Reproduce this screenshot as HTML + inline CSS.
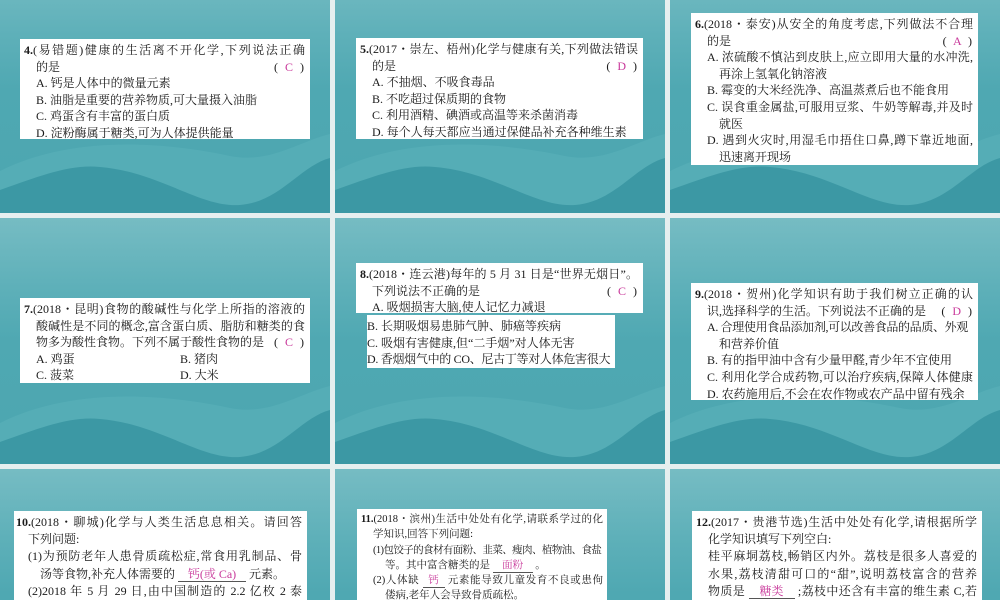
<!DOCTYPE html>
<html style="width:1000px;height:600px;overflow:hidden"><head><meta charset="utf-8">
<style>
*{margin:0;padding:0;box-sizing:border-box}
body{width:1000px;height:600px;background:#e6efef;position:relative;overflow:hidden;font-family:"Liberation Serif","Noto Serif CJK SC",serif;color:#1a1a1a}
.s{position:absolute;width:330px;overflow:hidden}
.s svg{position:absolute;left:0;width:330px;height:247px}
.b{position:absolute;background:#fff;font-size:12px;line-height:16.6px;padding:3px 5px 2px 4px;white-space:nowrap;overflow:hidden}
.b div{height:16.6px}
.j{text-align:justify;text-align-last:justify;text-justify:inter-character}
.i{padding-left:12px}
.ii{padding-left:24px}
.a{color:#c8389a}
.r{float:right;padding-right:1px;word-spacing:4px}
.u{color:#c8389a;border-bottom:1px solid #555;display:inline-block;text-align:center;text-align-last:center;line-height:13px}
b{font-weight:bold}
.sm{font-size:10.5px;line-height:15.3px}
.sm div{height:15.3px}
.lg div{height:17.2px}
.lg{line-height:17.2px}
</style></head><body>
<svg width="0" height="0" style="position:absolute;left:0;top:0">
<defs>
<linearGradient id="g" x1="0" y1="0" x2="0" y2="1">
<stop offset="0" stop-color="#76bcc3"/><stop offset="0.28" stop-color="#5eb0b9"/><stop offset="0.5" stop-color="#4fa8b2"/><stop offset="1" stop-color="#4ca6b0"/>
</linearGradient>
<g id="bg">
<rect width="330" height="247" fill="url(#g)"/>
<path d="M0,205 C70,170 160,175 230,190 C270,198 300,175 330,168 L330,247 L0,247Z" fill="#55adb6"/>
<path d="M0,224 C40,210 70,198 100,201 C160,206 200,242 240,239 C280,236 300,200 330,192 L330,247 L0,247Z" fill="#3c98a4"/>
</g></defs></svg>

<div class="s" style="left:0;top:0;height:213px"><svg style="top:-34px"><use href="#bg"/></svg></div>
<div class="s" style="left:335px;top:0;height:213px"><svg style="top:-34px"><use href="#bg"/></svg></div>
<div class="s" style="left:670px;top:0;height:213px"><svg style="top:-34px"><use href="#bg"/></svg></div>
<div class="s" style="left:0;top:218px;height:246px"><svg style="top:0"><use href="#bg"/></svg></div>
<div class="s" style="left:335px;top:218px;height:246px"><svg style="top:0"><use href="#bg"/></svg></div>
<div class="s" style="left:670px;top:218px;height:246px"><svg style="top:0"><use href="#bg"/></svg></div>
<div class="s" style="left:0;top:469px;height:131px"><svg style="top:0"><use href="#bg"/></svg></div>
<div class="s" style="left:335px;top:469px;height:131px"><svg style="top:0"><use href="#bg"/></svg></div>
<div class="s" style="left:670px;top:469px;height:131px"><svg style="top:0"><use href="#bg"/></svg></div>

<div class="b" style="left:20px;top:39px;width:290px;height:100px">
<div class="j"><b>4.</b>(易错题)健康的生活离不开化学,下列说法正确</div>
<div class="i">的是<span class="r">( <span class="a">C</span> )</span></div>
<div class="i">A. 钙是人体中的微量元素</div>
<div class="i">B. 油脂是重要的营养物质,可大量摄入油脂</div>
<div class="i">C. 鸡蛋含有丰富的蛋白质</div>
<div class="i">D. 淀粉酶属于糖类,可为人体提供能量</div>
</div>

<div class="b" style="left:356px;top:38px;width:287px;height:101px">
<div class="j"><b>5.</b>(2017・崇左、梧州)化学与健康有关,下列做法错误</div>
<div class="i">的是<span class="r">( <span class="a">D</span> )</span></div>
<div class="i">A. 不抽烟、不吸食毒品</div>
<div class="i">B. 不吃超过保质期的食物</div>
<div class="i">C. 利用酒精、碘酒或高温等来杀菌消毒</div>
<div class="i">D. 每个人每天都应当通过保健品补充各种维生素</div>
</div>

<div class="b" style="left:691px;top:13px;width:287px;height:152px">
<div class="j"><b>6.</b>(2018・泰安)从安全的角度考虑,下列做法不合理</div>
<div class="i">的是<span class="r">( <span class="a">A</span> )</span></div>
<div class="i j">A. 浓硫酸不慎沾到皮肤上,应立即用大量的水冲洗,</div>
<div class="ii">再涂上氢氧化钠溶液</div>
<div class="i">B. 霉变的大米经洗净、高温蒸煮后也不能食用</div>
<div class="i j">C. 误食重金属盐,可服用豆浆、牛奶等解毒,并及时</div>
<div class="ii">就医</div>
<div class="i j">D. 遇到火灾时,用湿毛巾捂住口鼻,蹲下靠近地面,</div>
<div class="ii">迅速离开现场</div>
</div>

<div class="b" style="left:20px;top:298px;width:290px;height:85px">
<div class="j"><b>7.</b>(2018・昆明)食物的酸碱性与化学上所指的溶液的</div>
<div class="i j">酸碱性是不同的概念,富含蛋白质、脂肪和糖类的食</div>
<div class="i">物多为酸性食物。下列不属于酸性食物的是<span class="r">( <span class="a">C</span> )</span></div>
<div class="i">A. 鸡蛋<span style="position:absolute;left:160px">B. 猪肉</span></div>
<div class="i">C. 菠菜<span style="position:absolute;left:160px">D. 大米</span></div>
</div>

<div class="b" style="left:356px;top:263px;width:287px;height:50px">
<div class="j"><b>8.</b>(2018・连云港)每年的 5 月 31 日是“世界无烟日”。</div>
<div class="i">下列说法不正确的是<span class="r">( <span class="a">C</span> )</span></div>
<div class="i">A. 吸烟损害大脑,使人记忆力减退</div>
</div>
<div class="b" style="left:367px;top:315px;width:248px;height:53px;padding-left:0;padding-right:0">
<div>B. 长期吸烟易患肺气肿、肺癌等疾病</div>
<div>C. 吸烟有害健康,但“二手烟”对人体无害</div>
<div style="letter-spacing:-0.3px">D. 香烟烟气中的 CO、尼古丁等对人体危害很大</div>
</div>

<div class="b" style="left:691px;top:283px;width:287px;height:117px">
<div class="j"><b>9.</b>(2018・贺州)化学知识有助于我们树立正确的认</div>
<div class="i">识,选择科学的生活。下列说法不正确的是<span class="r">( <span class="a">D</span> )</span></div>
<div class="i" style="letter-spacing:-0.35px">A. 合理使用食品添加剂,可以改善食品的品质、外观</div>
<div class="ii">和营养价值</div>
<div class="i">B. 有的指甲油中含有少量甲醛,青少年不宜使用</div>
<div class="i j">C. 利用化学合成药物,可以治疗疾病,保障人体健康</div>
<div class="i">D. 农药施用后,不会在农作物或农产品中留有残余</div>
</div>

<div class="b lg" style="left:14px;top:511px;width:293px;height:89px;padding-left:2px">
<div class="j"><b>10.</b>(2018・聊城)化学与人类生活息息相关。请回答</div>
<div class="i">下列问题:</div>
<div class="i j">(1)为预防老年人患骨质疏松症,常食用乳制品、骨</div>
<div class="ii">汤等食物,补充人体需要的 <span class="u" style="width:68px">钙(或 Ca)</span> 元素。</div>
<div class="i j">(2)2018 年 5 月 29 日,由中国制造的 2.2 亿枚 2 泰</div>
</div>

<div class="b sm" style="left:357px;top:509px;width:250px;height:91px;padding-right:4px">
<div class="j"><b>11.</b>(2018・滨州)生活中处处有化学,请联系学过的化</div>
<div class="i">学知识,回答下列问题:</div>
<div class="i" style="letter-spacing:-0.6px">(1)包饺子的食材有面粉、韭菜、瘦肉、植物油、食盐</div>
<div class="ii">等。其中富含糖类的是 <span class="u" style="width:40px">面粉</span> 。</div>
<div class="i j">(2)人体缺 <span class="u" style="width:22px">钙</span> 元素能导致儿童发育不良或患佝</div>
<div class="ii">偻病,老年人会导致骨质疏松。</div>
</div>

<div class="b lg" style="left:692px;top:511px;width:290px;height:89px">
<div class="j"><b>12.</b>(2017・贵港节选)生活中处处有化学,请根据所学</div>
<div class="i">化学知识填写下列空白:</div>
<div class="i j">桂平麻垌荔枝,畅销区内外。荔枝是很多人喜爱的</div>
<div class="i j">水果,荔枝清甜可口的“甜”,说明荔枝富含的营养</div>
<div class="i j">物质是 <span class="u" style="width:46px">糖类</span> ;荔枝中还含有丰富的维生素 C,若</div>
</div>
</body></html>
